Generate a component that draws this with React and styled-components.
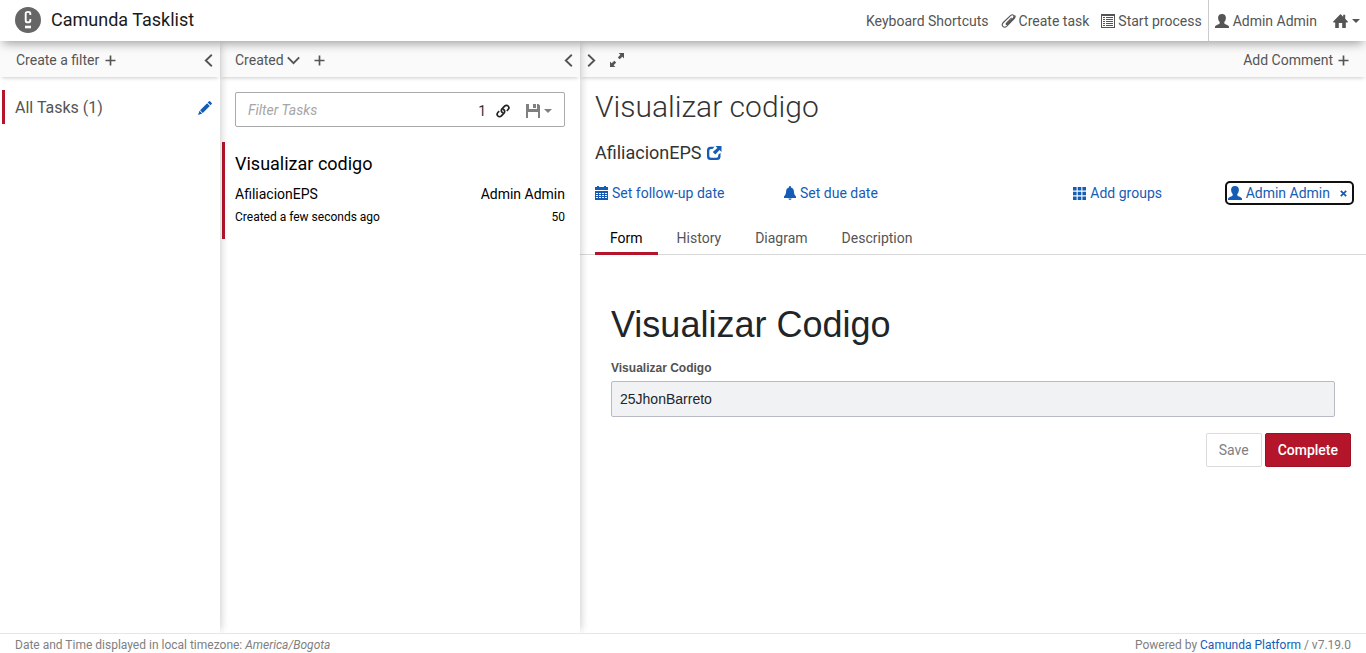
import React from "react";
import styled, { createGlobalStyle, css } from "styled-components";

const color = {
  text: "#333333",
  muted: "#555555",
  soft: "#808080",
  link: "#155cb5",
  brand: "#b5152b",
  bar: "#fafafa",
  line: "#d9d9d9",
};

const GlobalStyle = createGlobalStyle`
  *, *::before, *::after { box-sizing: border-box; }
  body {
    margin: 0;
    background: #fff;
    color: ${color.text};
    font-family: Roboto, "Noto Sans", sans-serif;
    font-size: 14px;
    line-height: 20px;
  }
  button, input { font: inherit; color: inherit; }
  a { color: inherit; text-decoration: none; }
  h1, h2, h3, p, ul { margin: 0; padding: 0; font-weight: 400; }
  ul { list-style: none; }
`;

/* Icons */

const Svg = styled.svg`
  display: block;
  flex: none;
  width: ${(p) => p.$w || 14}px;
  height: ${(p) => p.$h || 14}px;
  fill: ${(p) => (p.$line ? "none" : "currentColor")};
  stroke: ${(p) => (p.$line ? "currentColor" : "none")};
  stroke-width: ${(p) => p.$line || 0};
`;

const Icon = ({ w = 14, h = 14, line, children }) => (
  <Svg viewBox={`0 0 ${w} ${h}`} $w={w} $h={h} $line={line} aria-hidden="true">
    {children}
  </Svg>
);

const LogoIcon = () => (
  <Icon w={26} h={26}>
    <circle cx="13" cy="13" r="13" fill="#666" />
    <path
      d="M15.300 8V6.600Q15.300 4.900 13 4.900T10.700 6.600V13.400Q10.700 15.300 13 15.300T15.300 13.400V12"
      fill="none"
      stroke="#fff"
      strokeWidth="1.900"
    />
    <path d="M10 18.700h6v2.600h-6z" fill="#fff" />
  </Icon>
);
const PlusIcon = () => (
  <Icon w={11} h={11} line="1.7">
    <path d="M5.5 .5v10M.5 5.5h10" />
  </Icon>
);
const LeftIcon = () => (
  <Icon w={9} h={13} line="1.9">
    <path d="M7.8 .8 1.8 6.500l6 5.700" />
  </Icon>
);
const RightIcon = () => (
  <Icon w={9} h={13} line="1.9">
    <path d="M1.200 .8l6 5.700-6 5.700" />
  </Icon>
);
const DownIcon = () => (
  <Icon w={13} h={9} line="1.9">
    <path d="M.8 1.400l5.700 5.800 5.700-5.800" />
  </Icon>
);
const ExpandIcon = () => (
  <Icon>
    <path d="M8.6 0H14v5.4l-1.7-1.7-2.6 2.6-1.9-1.9 2.6-2.6zM0 8.6l1.7 1.7 2.6-2.6 1.9 1.9-2.6 2.6L5.400 14H0z" />
  </Icon>
);
const PaperclipIcon = () => (
  <Icon w={15} h={14} line="1.1">
    <path d="M10.600 3.900 5.600 9.100c-.9 1-.1 1.800.8.900l5.800-5.900c2-2.200-.6-4.500-2.700-2.500L2.300 8.500c-2.800 3 .6 6.300 3.500 3.600l6.900-6.900c1.500-1.600 2.100-2.700.9-3.900" />
  </Icon>
);
const ListIcon = () => (
  <Icon>
    <path
      fillRule="evenodd"
      d="M0 0h14v14H0zM1 2v11h12V2z"
    />
    <path d="M2 3h2v1H2zM5 3h7v1H5zM2 5h2v1H2zM5 5h7v1H5zM2 7h2v1H2zM5 7h7v1H5zM2 9h2v1H2zM5 9h7v1H5zM2 11h2v1H2zM5 11h7v1H5z" />
  </Icon>
);
const UserIcon = () => (
  <Icon w={14} h={14}>
    <path d="M7 0c2.600 0 3.900 1.500 3.900 3.700 0 1.900-.6 3.400-1.600 4.300v1c0 .6.400.9 1 1.200 2.100.8 3.700 1.500 3.700 2.600V14H0v-1.200c0-1.100 1.600-1.800 3.700-2.600.6-.3 1-.6 1-1.200V8C3.700 7.100 3.100 5.600 3.100 3.700 3.100 1.500 4.400 0 7 0z" />
  </Icon>
);
const HomeIcon = () => (
  <Icon w={15} h={14}>
    <path d="M7.500 0l2.700 2.700V.8h2V4.700L15 7.700l-.5.800h-1.700V14H9.200V9H5.800v5H2.200V8.500H.5L0 7.700z" />
  </Icon>
);
const CaretIcon = () => (
  <Icon w={8} h={4}>
    <path d="M0 0h8L4 4z" />
  </Icon>
);
const PencilIcon = () => (
  <Icon>
    <path d="M11 .3q.5-.5 1 0l1.700 1.700q.5.5 0 1l-1.300 1.300L9.700 1.600zM9.100 2.200l2.700 2.700-7 7-2.700-2.700zM1.500 9.800l2.700 2.700L0 14z" />
  </Icon>
);
const LinkIcon = () => (
  <Icon line="1.7">
    <path d="M7.300 8.900C5.300 8.300 4.700 6.300 6 4.900l2.600-2.700c1.200-1.200 2.600-1.100 3.500-.2 1 1 1 2.400 0 3.500L10.800 6.800" />
    <path d="M6.700 5.100c2 .6 2.600 2.600 1.300 4l-2.600 2.700c-1.200 1.200-2.600 1.100-3.500.2-1-1-1-2.400 0-3.500L3.200 7.200" />
  </Icon>
);
const SaveIcon = () => (
  <Icon>
    <path d="M0 0h3v5h8V0h1.500L14 1.500V14h-2V8H2v6H0zM7 0h3v4H7z" />
  </Icon>
);
const ShareIcon = () => (
  <Icon w={15} h={14}>
    <path d="M8.500 0H14.500v6l-1.900-1.900-4.300 4.300-2.500-2.500L10.400 1.900zM3.500 .8h4L5.500 3H4Q2.300 3 2.300 4.700v5.300Q2.300 11.700 4 11.700h5.500q1.700 0 1.700-1.700V8.800l2.300-2V10.500q0 3.500-3.500 3.500H3.500Q0 14 0 10.500v-6.200Q0 .8 3.500 .8z" />
  </Icon>
);
const CalendarIcon = () => (
  <Icon w={13} h={14}>
    <path d="M0 1h2V0h2v1h5V0h2v1h2v3H0z" />
    <path
      fillRule="evenodd"
      d="M0 5h13v9H0zM1 7h2v1H1zM4 7h2v1H4zM7 7h2v1H7zM10 7h2v1h-2zM1 9h2v1H1zM4 9h2v1H4zM7 9h2v1H7zM10 9h2v1h-2zM1 11h2v1H1zM4 11h2v1H4zM7 11h2v1H7zM10 11h2v1h-2z"
    />
  </Icon>
);
const BellIcon = () => (
  <Icon w={12} h={14}>
    <path d="M6 0q1.100 0 1.100 1.400C9.300 2 9.800 3.600 9.900 5.600c.1 2.400.9 3.600 2.100 5V12H0v-1.400c1.200-1.400 2-2.600 2.100-5C2.200 3.600 2.700 2 4.900 1.400Q4.900 0 6 0zM4.200 12.600h3.600Q7.200 14 6 14t-1.800-1.400z" />
  </Icon>
);
const GridIcon = () => (
  <Icon w={13} h={13}>
    <path d="M0 0h3.600v3.600H0zM4.700 0h3.600v3.600H4.700zM9.400 0H13v3.600H9.400zM0 4.700h3.600v3.600H0zM4.700 4.700h3.600v3.600H4.700zM9.400 4.700H13v3.600H9.400zM0 9.400h3.600V13H0zM4.700 9.400h3.600V13H4.700zM9.400 9.400H13V13H9.400z" />
  </Icon>
);
const CloseIcon = () => (
  <Icon w={7} h={7} line="1.7">
    <path d="M.8.8l5.400 5.400M6.200.8.8 6.200" />
  </Icon>
);

/* Shared controls */

const plain = css`
  display: inline-flex;
  align-items: center;
  gap: ${(p) => p.$gap ?? 4}px;
  padding: 0;
  border: 0;
  background: none;
  cursor: pointer;
  white-space: nowrap;
`;
const TextButton = styled.button`
  ${plain}
  color: ${(p) => p.$color || color.muted};
`;
const IconLink = styled.a`
  ${plain}
  color: ${(p) => p.$color || color.link};
`;

/* Page shell */

const Page = styled.div`
  display: flex;
  flex-direction: column;
  min-height: 100vh;
`;
const Header = styled.header`
  position: relative;
  z-index: 5;
  display: flex;
  justify-content: space-between;
  height: 41px;
  padding-left: 15px;
  background: #fff;
  box-shadow: 0 5px 10px -3px rgba(0, 0, 0, 0.4);
`;
const Brand = styled.a`
  display: flex;
  align-items: center;
  gap: 10px;
  padding-bottom: 2px;
  color: #1a1a1a;
  font-size: 18px;
`;
const Nav = styled.nav`
  display: flex;
  align-items: stretch;
`;
const NavButton = styled(TextButton)`
  padding: 0 6px;
`;
const Account = styled.div`
  display: flex;
  gap: 4px;
  border-left: 1px solid #ccc;
`;
const Columns = styled.main`
  display: flex;
  flex: 1;
`;
const Column = styled.section`
  position: relative;
  z-index: ${(p) => p.$layer};
  flex: ${(p) => (p.$width ? `0 0 ${p.$width}px` : "1 1 0")};
  min-width: 0;
  background: #fff;
  box-shadow: 4px 0 8px -3px rgba(0, 0, 0, 0.2);
`;
const Bar = styled.div`
  display: flex;
  align-items: center;
  justify-content: space-between;
  height: 36px;
  padding: 2px ${(p) => p.$right}px 0 ${(p) => p.$left}px;
  background: ${color.bar};
  box-shadow: 0 3px 4px -2px rgba(0, 0, 0, 0.2);
`;
const BarGroup = styled.div`
  display: flex;
  align-items: center;
  gap: 14px;
`;
const Footer = styled.footer`
  position: relative;
  z-index: 5;
  display: flex;
  justify-content: space-between;
  padding: 4px 15px 0;
  border-top: 1px solid #e6e6e6;
  background: #fff;
  color: ${color.soft};
  font-size: 12px;
  line-height: 15px;
`;
const FooterLink = styled.a`
  color: ${color.link};
`;

/* Filters */

const FilterRow = styled.div`
  display: flex;
  align-items: center;
  justify-content: space-between;
  height: 34px;
  margin: 13px 8px 0 2px;
  padding: 1px 0 0 10px;
  border-left: 3px solid ${color.brand};
  color: ${color.muted};
  font-size: 16px;
`;

/* Task list */

const SearchBox = styled.div`
  display: flex;
  align-items: center;
  height: 35px;
  margin: 15px 15px 0;
  padding: 0 12px;
  border: 1px solid #aaa;
  border-radius: 2px;
`;
const SearchInput = styled.input`
  flex: 1;
  min-width: 0;
  padding: 0;
  border: 0;
  outline: 0;
  background: none;
  &::placeholder {
    color: #a6a6a6;
    font-style: italic;
    opacity: 1;
  }
`;
const SearchTools = styled.div`
  display: flex;
  align-items: center;
  gap: ${(p) => p.$gap}px;
  padding-top: ${(p) => p.$drop || 0}px;
`;
const TaskCard = styled.a`
  display: block;
  margin: 15px 0 0 2px;
  padding: 10px 15px 8px 10px;
  border-left: 3px solid ${color.brand};
  color: #000;
`;
const CardTitle = styled.h2`
  margin-bottom: 8px;
  font-size: 18px;
  line-height: 24px;
`;
const CardRow = styled.div`
  display: flex;
  justify-content: space-between;
  font-size: ${(p) => (p.$small ? 12 : 14)}px;
  line-height: ${(p) => (p.$small ? 27 : 20)}px;
`;

/* Task detail */

const Detail = styled.div`
  padding: 12px 15px 0;
`;
const TaskTitle = styled.h1`
  font-size: 30px;
  font-weight: 300;
  line-height: 36px;
`;
const ProcessName = styled.h2`
  display: flex;
  align-items: center;
  gap: 5px;
  margin-top: 16px;
  font-size: 18px;
  line-height: 24px;
`;
const MetaGrid = styled.div`
  display: grid;
  grid-template-columns: repeat(4, 1fr);
  margin-top: 18px;
`;
const MetaCell = styled.div`
  display: flex;
  align-items: center;
  justify-content: ${(p) => (p.$end ? "flex-end" : "flex-start")};
`;
const Assignee = styled.div`
  display: flex;
  align-items: center;
  gap: 10px;
  height: 18px;
  padding-right: 4px;
  border-radius: 2px;
  outline: 2px solid #101010;
  outline-offset: 1px;
`;
const Tabs = styled.div`
  display: flex;
  gap: 4px;
  margin-top: 17px;
  padding: 0 15px;
  border-bottom: 1px solid ${color.line};
`;
const Tab = styled.button`
  height: 35px;
  margin-bottom: -1px;
  padding: 3px 15px 0;
  border: 0;
  border-bottom: 3px solid ${(p) => (p.$active ? color.brand : "transparent")};
  background: none;
  color: ${(p) => (p.$active ? "#000" : color.muted)};
  cursor: pointer;
`;
const FormBody = styled.form`
  padding: 48px 31px 0;
  font-family: "Liberation Sans", sans-serif;
`;
const FormTitle = styled.h2`
  color: #212529;
  font-size: 36px;
  line-height: 44px;
`;
const FieldLabel = styled.label`
  display: block;
  margin: 12px 0 4px;
  color: #525252;
  font-size: 12px;
  font-weight: 700;
  line-height: 18px;
`;
const FieldInput = styled.input`
  display: block;
  width: 100%;
  height: 36px;
  padding: 0 8px;
  border: 1px solid #b8bbc6;
  border-radius: 2px;
  background: #f1f2f4;
  color: #22252b;
`;
const Actions = styled.div`
  display: flex;
  justify-content: flex-end;
  gap: 3px;
  padding: 16px 15px 0;
`;
const ActionButton = styled.button`
  height: 34px;
  padding: 0 12px;
  border: 1px solid ${(p) => (p.$primary ? "#9c1225" : "#dcdcdc")};
  border-radius: 2px;
  background: ${(p) => (p.$primary ? color.brand : "#fff")};
  color: ${(p) => (p.$primary ? "#fff" : color.soft)};
  font-weight: ${(p) => (p.$primary ? 500 : 400)};
`;

const tabs = ["Form", "History", "Diagram", "Description"];

export default function App() {
  const [active, setActive] = React.useState("Form");
  return (
    <Page>
      <GlobalStyle />
      <Header>
        <Brand href="#">
          <LogoIcon />
          Camunda Tasklist
        </Brand>
        <Nav>
          <NavButton>Keyboard Shortcuts</NavButton>
          <NavButton $gap={3}><PaperclipIcon />Create task</NavButton>
          <NavButton $gap={3}><ListIcon />Start process</NavButton>
          <Account>
            <NavButton><UserIcon />Admin Admin</NavButton>
            <NavButton aria-label="Apps"><HomeIcon /><CaretIcon /></NavButton>
          </Account>
        </Nav>
      </Header>

      <Columns>
        <Column $width={220} $layer={3}>
          <Bar $left={16} $right={7}>
            <TextButton $gap={6}>Create a filter<PlusIcon /></TextButton>
            <TextButton aria-label="Collapse filters"><LeftIcon /></TextButton>
          </Bar>
          <FilterRow>
            <a href="#">All Tasks (1)</a>
            <IconLink href="#" aria-label="Edit filter"><PencilIcon /></IconLink>
          </FilterRow>
        </Column>

        <Column $width={360} $layer={2}>
          <Bar $left={15} $right={7}>
            <BarGroup>
              <TextButton $gap={3}>Created<DownIcon /></TextButton>
              <TextButton aria-label="Add sorting"><PlusIcon /></TextButton>
            </BarGroup>
            <TextButton aria-label="Collapse tasks"><LeftIcon /></TextButton>
          </Bar>
          <SearchBox>
            <SearchInput placeholder="Filter Tasks" aria-label="Filter Tasks" />
            <SearchTools $gap={16} $drop={3}>
              <SearchTools $gap={10}>
                <span>1</span>
                <TextButton $color="#222" aria-label="Copy link"><LinkIcon /></TextButton>
              </SearchTools>
              <TextButton $color={color.soft} aria-label="Saved searches">
                <SaveIcon /><CaretIcon />
              </TextButton>
            </SearchTools>
          </SearchBox>
          <TaskCard href="#">
            <CardTitle>Visualizar codigo</CardTitle>
            <CardRow><span>AfiliacionEPS</span><span>Admin Admin</span></CardRow>
            <CardRow $small><span>Created a few seconds ago</span><span>50</span></CardRow>
          </TaskCard>
        </Column>

        <Column $layer={1}>
          <Bar $left={7} $right={17}>
            <BarGroup>
              <TextButton aria-label="Collapse detail"><RightIcon /></TextButton>
              <TextButton aria-label="Full screen"><ExpandIcon /></TextButton>
            </BarGroup>
            <TextButton $gap={5}>Add Comment<PlusIcon /></TextButton>
          </Bar>
          <Detail>
            <TaskTitle>Visualizar codigo</TaskTitle>
            <ProcessName>
              AfiliacionEPS
              <IconLink href="#" aria-label="Open process"><ShareIcon /></IconLink>
            </ProcessName>
            <MetaGrid>
              <MetaCell>
                <TextButton $color={color.link}><CalendarIcon />Set follow-up date</TextButton>
              </MetaCell>
              <MetaCell>
                <TextButton $color={color.link}><BellIcon />Set due date</TextButton>
              </MetaCell>
              <MetaCell $end>
                <TextButton $color={color.link}><GridIcon />Add groups</TextButton>
              </MetaCell>
              <MetaCell $end>
                <Assignee>
                  <TextButton $color={color.link}><UserIcon />Admin Admin</TextButton>
                  <TextButton $color={color.link} aria-label="Remove assignee"><CloseIcon /></TextButton>
                </Assignee>
              </MetaCell>
            </MetaGrid>
          </Detail>
          <Tabs role="tablist">
            {tabs.map((t) => (
              <Tab
                key={t}
                role="tab"
                aria-selected={t === active}
                $active={t === active}
                onClick={() => setActive(t)}
              >
                {t}
              </Tab>
            ))}
          </Tabs>
          <FormBody>
            <FormTitle>Visualizar Codigo</FormTitle>
            <FieldLabel htmlFor="codigo">Visualizar Codigo</FieldLabel>
            <FieldInput id="codigo" defaultValue="25JhonBarreto" readOnly />
          </FormBody>
          <Actions>
            <ActionButton>Save</ActionButton>
            <ActionButton $primary>Complete</ActionButton>
          </Actions>
        </Column>
      </Columns>

      <Footer>
        <span>Date and Time displayed in local timezone: <em>America/Bogota</em></span>
        <span>Powered by <FooterLink href="#">Camunda Platform</FooterLink> / v7.19.0</span>
      </Footer>
    </Page>
  );
}
